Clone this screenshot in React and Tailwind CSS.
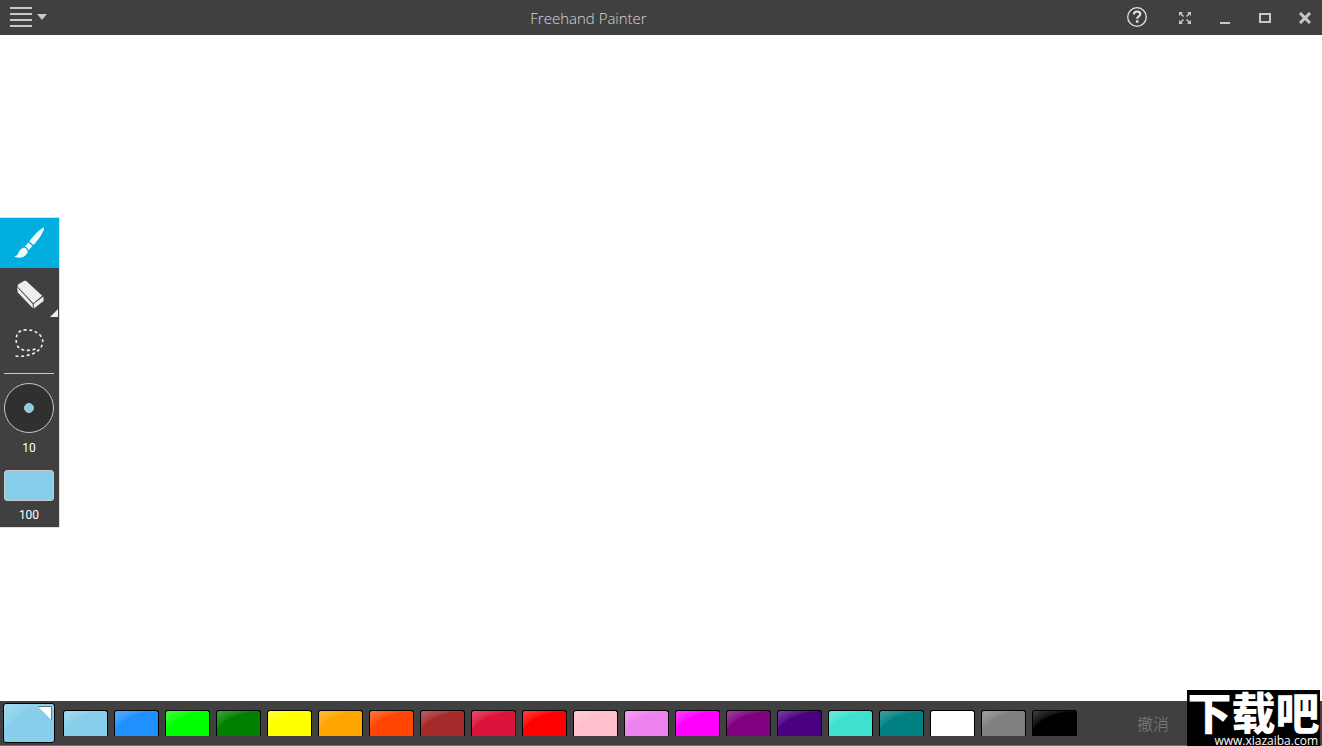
import { useState } from 'react';

const palette = [
  { name: 'Sky blue', bg: 'bg-[#87ceeb]' },
  { name: 'Dodger blue', bg: 'bg-[#1e90ff]' },
  { name: 'Lime', bg: 'bg-[#00ff00]' },
  { name: 'Green', bg: 'bg-[#008000]' },
  { name: 'Yellow', bg: 'bg-[#ffff00]' },
  { name: 'Orange', bg: 'bg-[#ffa500]' },
  { name: 'Orange red', bg: 'bg-[#ff4500]' },
  { name: 'Brown', bg: 'bg-[#a52a2a]' },
  { name: 'Crimson', bg: 'bg-[#dc143c]' },
  { name: 'Red', bg: 'bg-[#ff0000]' },
  { name: 'Pink', bg: 'bg-[#ffc0cb]' },
  { name: 'Violet', bg: 'bg-[#ee82ee]' },
  { name: 'Magenta', bg: 'bg-[#ff00ff]' },
  { name: 'Purple', bg: 'bg-[#800080]' },
  { name: 'Indigo', bg: 'bg-[#4b0082]' },
  { name: 'Turquoise', bg: 'bg-[#40e0d0]' },
  { name: 'Teal', bg: 'bg-[#008080]' },
  { name: 'White', bg: 'bg-white' },
  { name: 'Gray', bg: 'bg-[#808080]' },
  { name: 'Black', bg: 'bg-black' },
];

// Light sheen in the upper left corner of a swatch
const gloss =
  'bg-[radial-gradient(ellipse_110%_105%_at_100%_100%,transparent_92%,rgba(255,255,255,0.08)_97%,rgba(255,255,255,0.28)_135%)]';

const BrushIcon = () => (
  <svg width="32" height="32" viewBox="0 0 32 32" fill="#f0fafd">
    <path d="M29.8.9c.9-.3 1.5.4 1.2 1.3-.7 2.400-3 6.500-6.300 10.900-1.400 1.900-2.800 3.500-4.200 4.900l-4.200-3.600c1.600-2.200 4-5.100 6.900-8.100 3-3 5.200-4.900 6.600-5.400z" />
    <path d="M15.400 15.600l4 3.500-3.800 4.100c-.8-1.900-2-3.100-3.800-3.700z" />
    <path d="M10.900 20.400c2.200.6 3.500 2 3.900 4.100-1.100 3.900-4.400 6-8.600 6.200-2 .1-3.800-.4-5.200-1.600 2 .2 3.300-.6 4.100-2.700 1-3 2.900-5.100 5.800-6z" />
  </svg>
);

const EraserIcon = () => (
  <svg width="32" height="32" viewBox="0 0 32 32" fill="#eee">
    <path d="M5 7.500L11 4c.8-.4 1.800-.4 2.500.2L29.200 18.800 20.300 26.200 4.600 9.400z" />
    <path d="M20.600 27.100l9.800-7.600.2 4.400-9.700 7.500z" />
    <path d="M4 9.900L19.600 27l.3 4.200L4.800 15.400z" />
  </svg>
);

const LassoIcon = () => (
  <svg width="30" height="30" viewBox="0 0 30 30" fill="none" stroke="#f0f0f0" strokeWidth="1.600" strokeDasharray="3 2.600">
    <path d="M1.500 28.200c8 .5 18-1 23.500-6.500 3.500-3.500 5-8.500 2.500-12.500C24.500 4 18.500 1.800 12 1.900 5 2 2.500 5.500 2.200 11c-.3 6 2.300 10.500 8.800 11.300 4.500.5 9-1 12.500-1.500" />
  </svg>
);

const tools = [
  { id: 'brush', label: 'Brush', icon: BrushIcon },
  { id: 'eraser', label: 'Eraser', icon: EraserIcon, more: true },
  { id: 'lasso', label: 'Lasso', icon: LassoIcon },
];

// Title bar
const TitleBar = () => (
  <header className="flex h-[35px] shrink-0 items-center bg-[#404040] text-[#c8c8c8]">
    <button aria-label="Menu" className="flex h-full w-[60px] items-center pb-0.5 pl-2.5">
      <svg width="38" height="22" viewBox="0 0 38 22" fill="currentColor">
        <path d="M0 1h22v2H0zM0 7h22v2H0zM0 13h22v2H0zM0 19h22v2H0zM27 8h10l-5 6z" />
      </svg>
    </button>
    <h1 className="flex-1 text-center text-[15px] leading-5 font-light text-[#d8d8d8]">Freehand Painter</h1>
    <div className="flex h-full items-center gap-1.5">
      <button aria-label="Help" className="mr-[5px] flex h-full w-10 items-center justify-center pb-0.5">
        <svg width="22" height="22" viewBox="0 0 22 22" fill="none" stroke="#e2e2e2">
          <circle cx="11" cy="11" r="9.300" strokeWidth="1.300" />
          <path d="M7.800 8.400c.2-2 1.400-2.900 3.300-2.900s3.200 1 3.200 2.600c0 2.300-3.100 2.200-3.100 4.700" strokeWidth="2.200" />
          <path d="M11.200 14.300v2.400" strokeWidth="2.600" />
        </svg>
      </button>
      <button aria-label="Full screen" className="flex h-full w-[34px] items-center justify-center">
        <svg width="12" height="12" viewBox="0 0 12 12" fill="currentColor" stroke="currentColor">
          <path stroke="none" d="M0 0h4L0 4zM12 0v4L8 0zM0 12V8l4 4zM12 12H8l4-4z" />
          <path strokeWidth="1.500" d="M1 1l3.500 3.500M11 1L7.500 4.500M1 11l3.500-3.500M11 11L7.500 7.500" />
        </svg>
      </button>
      <button aria-label="Minimize" className="flex h-full w-[34px] items-center justify-center">
        <svg width="10" height="12" viewBox="0 0 10 12" fill="currentColor">
          <path d="M0 10h10v2H0z" />
        </svg>
      </button>
      <button aria-label="Maximize" className="flex h-full w-[34px] items-center justify-center">
        <svg width="12" height="10" viewBox="0 0 12 10" fill="none" stroke="currentColor" strokeWidth="2">
          <path d="M1 1h10v8H1z" />
        </svg>
      </button>
      <button aria-label="Close" className="flex h-full w-[34px] items-center justify-center">
        <svg width="12" height="12" viewBox="0 0 12 12" fill="none" stroke="currentColor" strokeWidth="3">
          <path d="M1 1l10 10M11 1L1 11" />
        </svg>
      </button>
    </div>
  </header>
);

// Tools, brush size and opacity
const ToolPanel = ({ tool, onToolChange, color }) => (
  <aside className="w-[60px] shrink-0 border-y border-r border-[#e0e0e0] bg-[#404040] font-[Roboto,sans-serif] text-[12px] leading-4 text-white">
    {tools.map(({ id, label, icon: Icon, more }) => (
      <button
        key={id}
        aria-label={label}
        aria-pressed={tool === id}
        onClick={() => onToolChange(id)}
        className={`relative flex h-[50px] w-full items-center justify-center pr-px ${tool === id ? 'bg-[#00aee0]' : ''}`}
      >
        <Icon />
        {more && (
          <svg className="absolute right-px bottom-px" width="8" height="8" viewBox="0 0 8 8" fill="#eee">
            <path d="M8 0v8H0z" />
          </svg>
        )}
      </button>
    ))}
    <div className="mr-[5px] ml-1 text-center">
      <div className="mt-[5px] mb-[9px] border-t border-[#c8c8c8]" />
      <button aria-label="Brush size" className="flex size-[50px] items-center justify-center rounded-full border border-[#c8c8c8] bg-[#303030]">
        <span className={`size-2.5 rounded-full border border-[#b5c4cb] ${color.bg}`} />
      </button>
      <p className="mt-[7px]">10</p>
      <button aria-label="Opacity" className={`mt-3.5 block h-[31px] w-full rounded-[3px] border border-[#c8c8c8] ${color.bg}`} />
      <p className="mt-1.5 pb-1">100</p>
    </div>
  </aside>
);

// Colours along the bottom edge
const ColorBar = ({ color, onColorChange }) => (
  <footer className="flex h-[45px] shrink-0 items-center border-b border-[#707070] bg-[#404040] pl-[3px]">
    <button aria-label="Current color" className={`relative h-10 w-[52px] shrink-0 rounded-[3px] border border-black ${color.bg} ${gloss}`}>
      <svg className="absolute top-0.5 right-0.5" width="14" height="14" viewBox="0 0 14 14">
        <path d="M0 .5h13.500V14z" fill="#fff" />
        <path d="M0 .5h13.500V14" fill="none" stroke="#777" />
      </svg>
    </button>
    <div className="ml-2 flex shrink-0 gap-1.5">
      {palette.map((item) => (
        <button
          key={item.name}
          aria-label={item.name}
          onClick={() => onColorChange(item)}
          className={`h-[26px] w-[45px] rounded-t-[3px] border-x border-t border-black ${item.bg} ${gloss}`}
        />
      ))}
    </div>
    <button className="mr-[153px] ml-auto pt-0.5 text-[16px] leading-5 font-light whitespace-nowrap text-[#808080]">撤消</button>
  </footer>
);

const Watermark = () => (
  <div className="absolute right-0.5 bottom-0 h-14 w-[133px] overflow-hidden bg-black text-white">
    <p className="text-center font-['Noto_Sans_CJK_SC',sans-serif] text-[44px] leading-[42px] font-black whitespace-nowrap">下载吧</p>
    <p className="absolute right-0.5 -bottom-[3px] text-[12px] leading-4">www.xiazaiba.com</p>
  </div>
);

export default function App() {
  const [tool, setTool] = useState('brush');
  const [color, setColor] = useState(palette[0]);

  return (
    <div className="relative flex h-screen w-full flex-col overflow-hidden bg-white font-['Open_Sans','Noto_Sans_CJK_SC',sans-serif]">
      <TitleBar />
      <main className="flex min-h-0 flex-1 items-center pt-2">
        <ToolPanel tool={tool} onToolChange={setTool} color={color} />
        <canvas className="h-full min-w-0 flex-1" />
      </main>
      <ColorBar color={color} onColorChange={setColor} />
      <Watermark />
    </div>
  );
}
